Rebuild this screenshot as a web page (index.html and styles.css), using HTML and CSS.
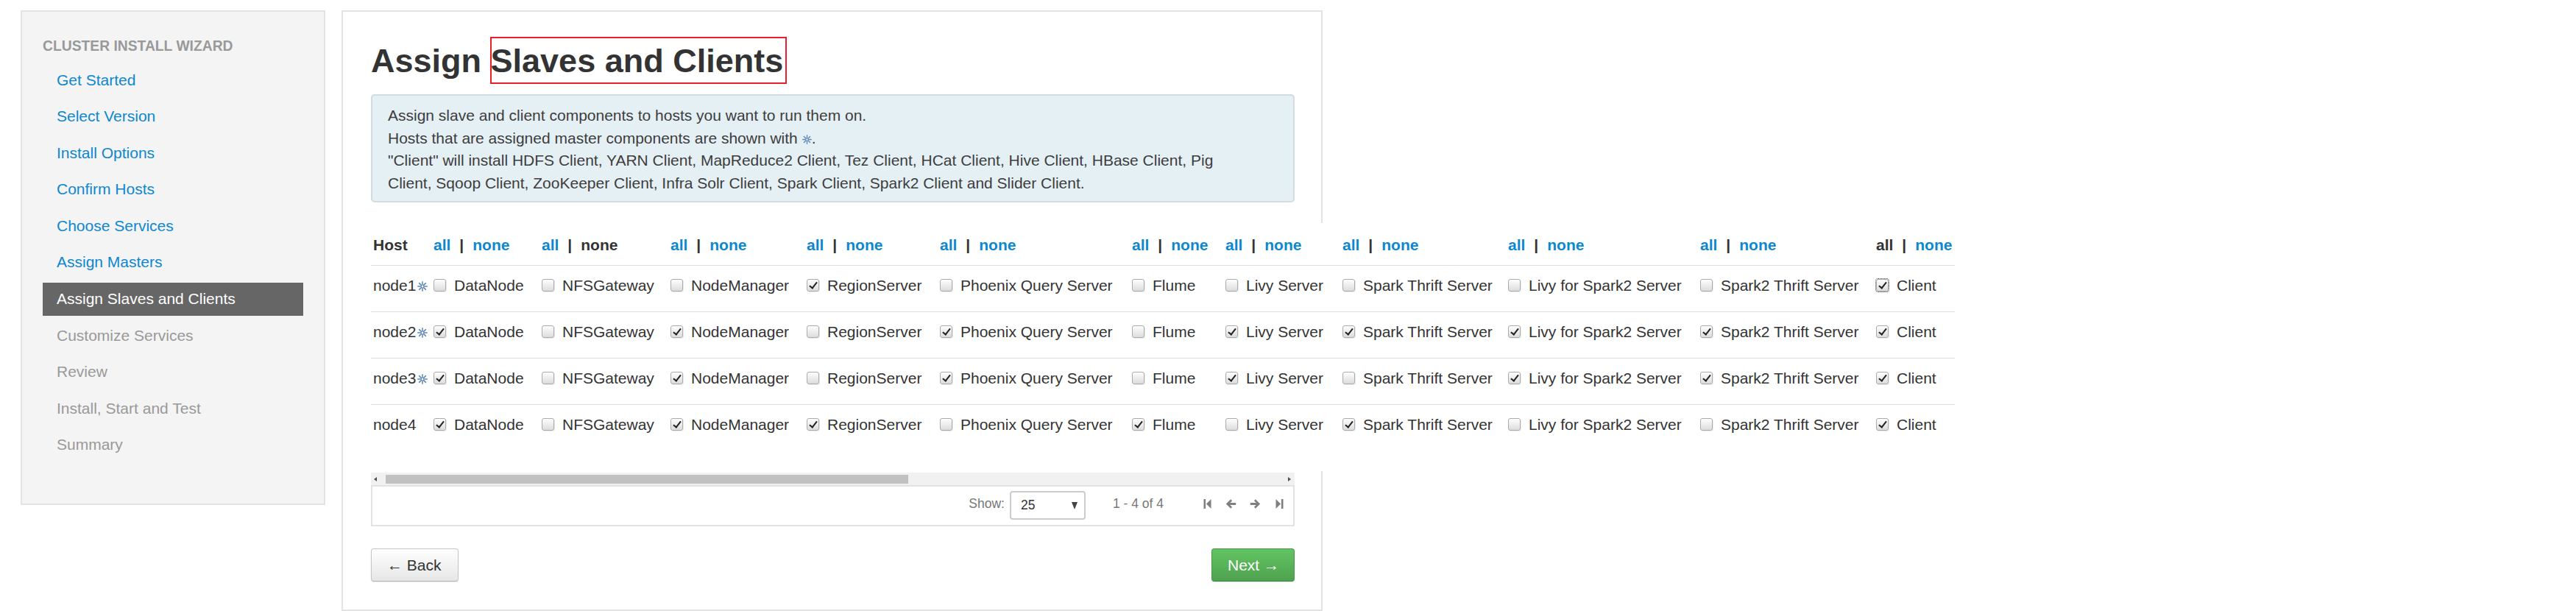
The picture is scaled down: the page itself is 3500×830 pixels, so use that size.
FILE: index.html
```html
<!DOCTYPE html>
<html lang="en">
<head>
<meta charset="utf-8">
<title>Assign Slaves and Clients</title>
<link rel="stylesheet" href="styles.css">
</head>
<body>
<div class="page">
  <aside class="wizard-nav">
    <div class="nav-header">Cluster Install Wizard</div>
    <ul class="steps">
      <li><a>Get Started</a></li>
      <li><a>Select Version</a></li>
      <li><a>Install Options</a></li>
      <li><a>Confirm Hosts</a></li>
      <li><a>Choose Services</a></li>
      <li><a>Assign Masters</a></li>
      <li class="active"><a>Assign Slaves and Clients</a></li>
      <li class="disabled"><a>Customize Services</a></li>
      <li class="disabled"><a>Review</a></li>
      <li class="disabled"><a>Install, Start and Test</a></li>
      <li class="disabled"><a>Summary</a></li>
    </ul>
  </aside>

  <main class="panel">
    <h1 class="title">Assign <span class="hl">Slaves and Clients</span></h1>

    <div class="alert">
      <div>Assign slave and client components to hosts you want to run them on.</div>
      <div>Hosts that are assigned master components are shown with <svg class="star" viewBox="0 0 14 14"><path d="M7 .8v4.3M7 8.9v4.3M.8 7h4.3M8.9 7h4.3M2.6 2.6l3 3M8.4 8.4l3 3M11.4 2.6l-3 3M5.6 8.4l-3 3"/></svg>.</div>
      <div>"Client" will install HDFS Client, YARN Client, MapReduce2 Client, Tez Client, HCat Client, Hive Client, HBase Client, Pig Client, Sqoop Client, ZooKeeper Client, Infra Solr Client, Spark Client, Spark2 Client and Slider Client.</div>
    </div>

    <div class="grid">
      <table class="assign">
        <colgroup>
          <col class="w-host"><col class="w-dn"><col class="w-nfs"><col class="w-nm"><col class="w-rs"><col class="w-pqs"><col class="w-fl"><col class="w-livy"><col class="w-sts"><col class="w-livy2"><col class="w-sts2"><col class="w-cl">
        </colgroup>
        <thead>
          <tr>
            <th>Host</th>
            <th><a>all</a><span class="sep">|</span><a>none</a></th>
            <th><a>all</a><span class="sep">|</span><span class="off">none</span></th>
            <th><a>all</a><span class="sep">|</span><a>none</a></th>
            <th><a>all</a><span class="sep">|</span><a>none</a></th>
            <th><a>all</a><span class="sep">|</span><a>none</a></th>
            <th><a>all</a><span class="sep">|</span><a>none</a></th>
            <th><a>all</a><span class="sep">|</span><a>none</a></th>
            <th><a>all</a><span class="sep">|</span><a>none</a></th>
            <th><a>all</a><span class="sep">|</span><a>none</a></th>
            <th><a>all</a><span class="sep">|</span><a>none</a></th>
            <th><span class="off">all</span><span class="sep">|</span><a>none</a></th>
          </tr>
        </thead>
        <tbody>
          <tr>
            <td>node1<svg class="star" viewBox="0 0 14 14"><path d="M7 .8v4.3M7 8.9v4.3M.8 7h4.3M8.9 7h4.3M2.6 2.6l3 3M8.4 8.4l3 3M11.4 2.6l-3 3M5.6 8.4l-3 3"/></svg></td>
            <td><span class="cb"></span>DataNode</td>
            <td><span class="cb"></span>NFSGateway</td>
            <td><span class="cb"></span>NodeManager</td>
            <td><span class="cb on"></span>RegionServer</td>
            <td><span class="cb"></span>Phoenix Query Server</td>
            <td><span class="cb"></span>Flume</td>
            <td><span class="cb"></span>Livy Server</td>
            <td><span class="cb"></span>Spark Thrift Server</td>
            <td><span class="cb"></span>Livy for Spark2 Server</td>
            <td><span class="cb"></span>Spark2 Thrift Server</td>
            <td><span class="cb on focus"></span>Client</td>
          </tr>
          <tr>
            <td>node2<svg class="star" viewBox="0 0 14 14"><path d="M7 .8v4.3M7 8.9v4.3M.8 7h4.3M8.9 7h4.3M2.6 2.6l3 3M8.4 8.4l3 3M11.4 2.6l-3 3M5.6 8.4l-3 3"/></svg></td>
            <td><span class="cb on"></span>DataNode</td>
            <td><span class="cb"></span>NFSGateway</td>
            <td><span class="cb on"></span>NodeManager</td>
            <td><span class="cb"></span>RegionServer</td>
            <td><span class="cb on"></span>Phoenix Query Server</td>
            <td><span class="cb"></span>Flume</td>
            <td><span class="cb on"></span>Livy Server</td>
            <td><span class="cb on"></span>Spark Thrift Server</td>
            <td><span class="cb on"></span>Livy for Spark2 Server</td>
            <td><span class="cb on"></span>Spark2 Thrift Server</td>
            <td><span class="cb on"></span>Client</td>
          </tr>
          <tr>
            <td>node3<svg class="star" viewBox="0 0 14 14"><path d="M7 .8v4.3M7 8.9v4.3M.8 7h4.3M8.9 7h4.3M2.6 2.6l3 3M8.4 8.4l3 3M11.4 2.6l-3 3M5.6 8.4l-3 3"/></svg></td>
            <td><span class="cb on"></span>DataNode</td>
            <td><span class="cb"></span>NFSGateway</td>
            <td><span class="cb on"></span>NodeManager</td>
            <td><span class="cb"></span>RegionServer</td>
            <td><span class="cb on"></span>Phoenix Query Server</td>
            <td><span class="cb"></span>Flume</td>
            <td><span class="cb on"></span>Livy Server</td>
            <td><span class="cb"></span>Spark Thrift Server</td>
            <td><span class="cb on"></span>Livy for Spark2 Server</td>
            <td><span class="cb on"></span>Spark2 Thrift Server</td>
            <td><span class="cb on"></span>Client</td>
          </tr>
          <tr>
            <td>node4</td>
            <td><span class="cb on"></span>DataNode</td>
            <td><span class="cb"></span>NFSGateway</td>
            <td><span class="cb on"></span>NodeManager</td>
            <td><span class="cb on"></span>RegionServer</td>
            <td><span class="cb"></span>Phoenix Query Server</td>
            <td><span class="cb on"></span>Flume</td>
            <td><span class="cb"></span>Livy Server</td>
            <td><span class="cb on"></span>Spark Thrift Server</td>
            <td><span class="cb"></span>Livy for Spark2 Server</td>
            <td><span class="cb"></span>Spark2 Thrift Server</td>
            <td><span class="cb on"></span>Client</td>
          </tr>
        </tbody>
      </table>
    </div>

    <div class="hscroll">
      <span class="arr arr-l"></span>
      <span class="thumb"></span>
      <span class="arr arr-r"></span>
    </div>

    <div class="pager">
      <span class="show">Show:</span>
      <div class="sel"><span>25</span><span class="caret"></span></div>
      <span class="range">1 - 4 of 4</span>
      <svg class="pg pg-first" viewBox="0 0 11 15"><rect x="0.5" y="1" width="2.6" height="13"/><path d="M10.5 1 L4 7.5 L10.5 14Z"/></svg>
      <svg class="pg pg-prev" viewBox="0 0 15 15"><path d="M7.2 1.3 L0.8 7.5 L7.2 13.7 L9.1 11.8 L6.2 9 H14.2 V6 H6.2 L9.1 3.2 Z"/></svg>
      <svg class="pg pg-next" viewBox="0 0 15 15"><path d="M7.8 1.3 L14.2 7.5 L7.8 13.7 L5.9 11.8 L8.8 9 H0.8 V6 H8.8 L5.9 3.2 Z"/></svg>
      <svg class="pg pg-last" viewBox="0 0 11 15"><path d="M0.5 1 L7 7.5 L0.5 14Z"/><rect x="7.9" y="1" width="2.6" height="13"/></svg>
    </div>

    <div class="actions">
      <button class="btn btn-back">&larr; Back</button>
      <button class="btn btn-next">Next &rarr;</button>
    </div>
  </main>
</div>
</body>
</html>
```

FILE: styles.css
```css
* { box-sizing: border-box; }

body {
  margin: 0;
  background: #fff;
  font-family: "Liberation Sans", Arial, sans-serif;
  font-size: 21px;
  color: #333;
}

.page {
  display: flex;
  align-items: flex-start;
  gap: 22px;
  padding: 14px 0 0 28px;
}

/* ---------- wizard sidebar ---------- */
.wizard-nav {
  flex: none;
  width: 414px;
  background: #f4f4f4;
  border: 2px solid #e3e3e3;
  padding: 29px 28px 52px;
}

.nav-header {
  font-size: 19.3px;
  font-weight: bold;
  line-height: 35px;
  color: #999;
  text-transform: uppercase;
  margin-bottom: 6px;
}

.steps {
  list-style: none;
  margin: 0;
  padding: 0;
}

.steps li { margin-bottom: 4.6px; }

.steps a {
  display: block;
  padding: 7.5px 10px 7.5px 19px;
  line-height: 30px;
  color: #0d87cf;
  text-decoration: none;
}

.steps .active a { background: #666; color: #fff; }
.steps .disabled a { color: #999; }

/* ---------- main panel ---------- */
.panel {
  flex: none;
  width: 1333px;
  border: 2px solid #e3e3e3;
  padding: 42px 36px 38px 38px;
}

.title {
  margin: 0;
  font-size: 45px;
  line-height: 50px;
  font-weight: bold;
  color: #333;
}

.hl { position: relative; }
.hl::after {
  content: "";
  position: absolute;
  left: -1px;
  right: -5px;
  top: -7px;
  bottom: -6px;
  border: 2px solid #e8202e;
}

.alert {
  margin-top: 20px;
  background: #e5f0f5;
  border: 2px solid #d2dce1;
  border-radius: 5px;
  padding: 12px 60px 9px 21px;
  line-height: 30.5px;
  color: #3d3d3d;
}

.star {
  width: 14px;
  height: 14px;
  margin-left: 2px;
  vertical-align: -1px;
  fill: none;
  stroke: #5e88b6;
  stroke-width: 1.5;
  stroke-linecap: round;
}

.alert .star { margin-left: 0; width: 13px; height: 13px; }

/* ---------- assignment table ---------- */
.grid {
  width: max-content;
  margin-top: 28px;
  padding: 2px 0 28px;
  background: #fff;
}

.assign {
  table-layout: fixed;
  width: 2152px;
  border-collapse: separate;
  border-spacing: 0;
  background: #fff;
}

.w-host { width: 82px; }
.w-dn { width: 147px; }
.w-nfs { width: 175px; }
.w-nm { width: 185px; }
.w-rs { width: 181px; }
.w-pqs { width: 261px; }
.w-fl { width: 127px; }
.w-livy { width: 159px; }
.w-sts { width: 225px; }
.w-livy2 { width: 261px; }
.w-sts2 { width: 239px; }
.w-cl { width: 110px; }

.assign th {
  text-align: left;
  font-weight: bold;
  padding: 13px 4px 12px 3px;
  line-height: 30px;
  white-space: nowrap;
  vertical-align: top;
}

.assign td {
  padding: 12px 4px 20px 3px;
  line-height: 30px;
  border-top: 1px solid #dddddd;
  white-space: nowrap;
  vertical-align: top;
}

.assign th a { color: #0d87cf; text-decoration: none; }
.assign th .off { color: #333; }
.sep { margin: 0 12px; color: #333; }

.cb {
  position: relative;
  display: inline-block;
  width: 17px;
  height: 17px;
  margin-right: 11px;
  vertical-align: -1px;
  border: 1px solid #ababab;
  border-radius: 3px;
  background: linear-gradient(#fefefe, #dcdcdc);
  box-shadow: 1px 1px 0 #ececec;
}

.cb.on::after {
  content: "";
  position: absolute;
  left: 5px;
  top: 1px;
  width: 4px;
  height: 9px;
  border: solid #222;
  border-width: 0 2.2px 2.2px 0;
  transform: rotate(38deg);
}

.cb.focus { outline: 1px dotted #444; outline-offset: 0; }

/* ---------- fake horizontal scrollbar ---------- */
.hscroll {
  margin-top: 2px;
  height: 17px;
  background: #f1f1f1;
  display: flex;
  align-items: center;
}

.arr {
  width: 0;
  height: 0;
  border-top: 3.5px solid transparent;
  border-bottom: 3.5px solid transparent;
}
.arr-l { border-right: 4px solid #505050; margin-left: 4px; }
.arr-r { border-left: 4px solid #505050; margin-left: auto; margin-right: 5px; }

.thumb {
  margin-left: 12px;
  width: 710px;
  height: 12px;
  background: #c1c1c1;
}

/* ---------- pager ---------- */
.pager {
  height: 56px;
  border: 2px solid #e3e3e3;
  display: flex;
  justify-content: flex-end;
  align-items: center;
  padding: 0 13px 5px 0;
  font-size: 17.5px;
  color: #777;
}

.sel {
  margin-left: 7px;
  margin-top: 4px;
  width: 103px;
  height: 39px;
  border: 2px solid #cccccc;
  border-radius: 4px;
  background: #fff;
  color: #333;
  display: flex;
  align-items: center;
  justify-content: space-between;
  padding: 0 9px 0 13px;
}

.caret {
  width: 0;
  height: 0;
  border-left: 4.5px solid transparent;
  border-right: 4.5px solid transparent;
  border-top: 10px solid #444;
}

.range { margin-left: 37px; }

.pg { height: 15px; fill: #7f7f7f; }
.pg-first { width: 11px; margin-left: 54px; }
.pg-prev { width: 15px; margin-left: 19px; }
.pg-next { width: 15px; margin-left: 18px; }
.pg-last { width: 11px; margin-left: 20px; }

/* ---------- buttons ---------- */
.actions {
  margin-top: 30px;
  display: flex;
  justify-content: space-between;
}

.btn {
  font-family: inherit;
  font-size: 21px;
  line-height: 30px;
  height: 45px;
  border-radius: 4px;
  cursor: pointer;
}

.btn-back {
  width: 119px;
  padding: 6.5px 0 6.5px 21px;
  text-align: left;
  color: #333;
  border: 1px solid #c6c6c6;
  border-bottom-color: #b0b0b0;
  background: linear-gradient(#ffffff, #e6e6e6);
  box-shadow: 0 1px 2px rgba(0, 0, 0, 0.08);
}

.btn-next {
  width: 113px;
  padding: 6.5px 0 6.5px 21px;
  text-align: left;
  color: #fff;
  border: 1px solid #4a974a;
  border-bottom-color: #3f853f;
  background: linear-gradient(#62c462, #4fa24f);
  box-shadow: 0 1px 2px rgba(0, 0, 0, 0.1);
}
```
